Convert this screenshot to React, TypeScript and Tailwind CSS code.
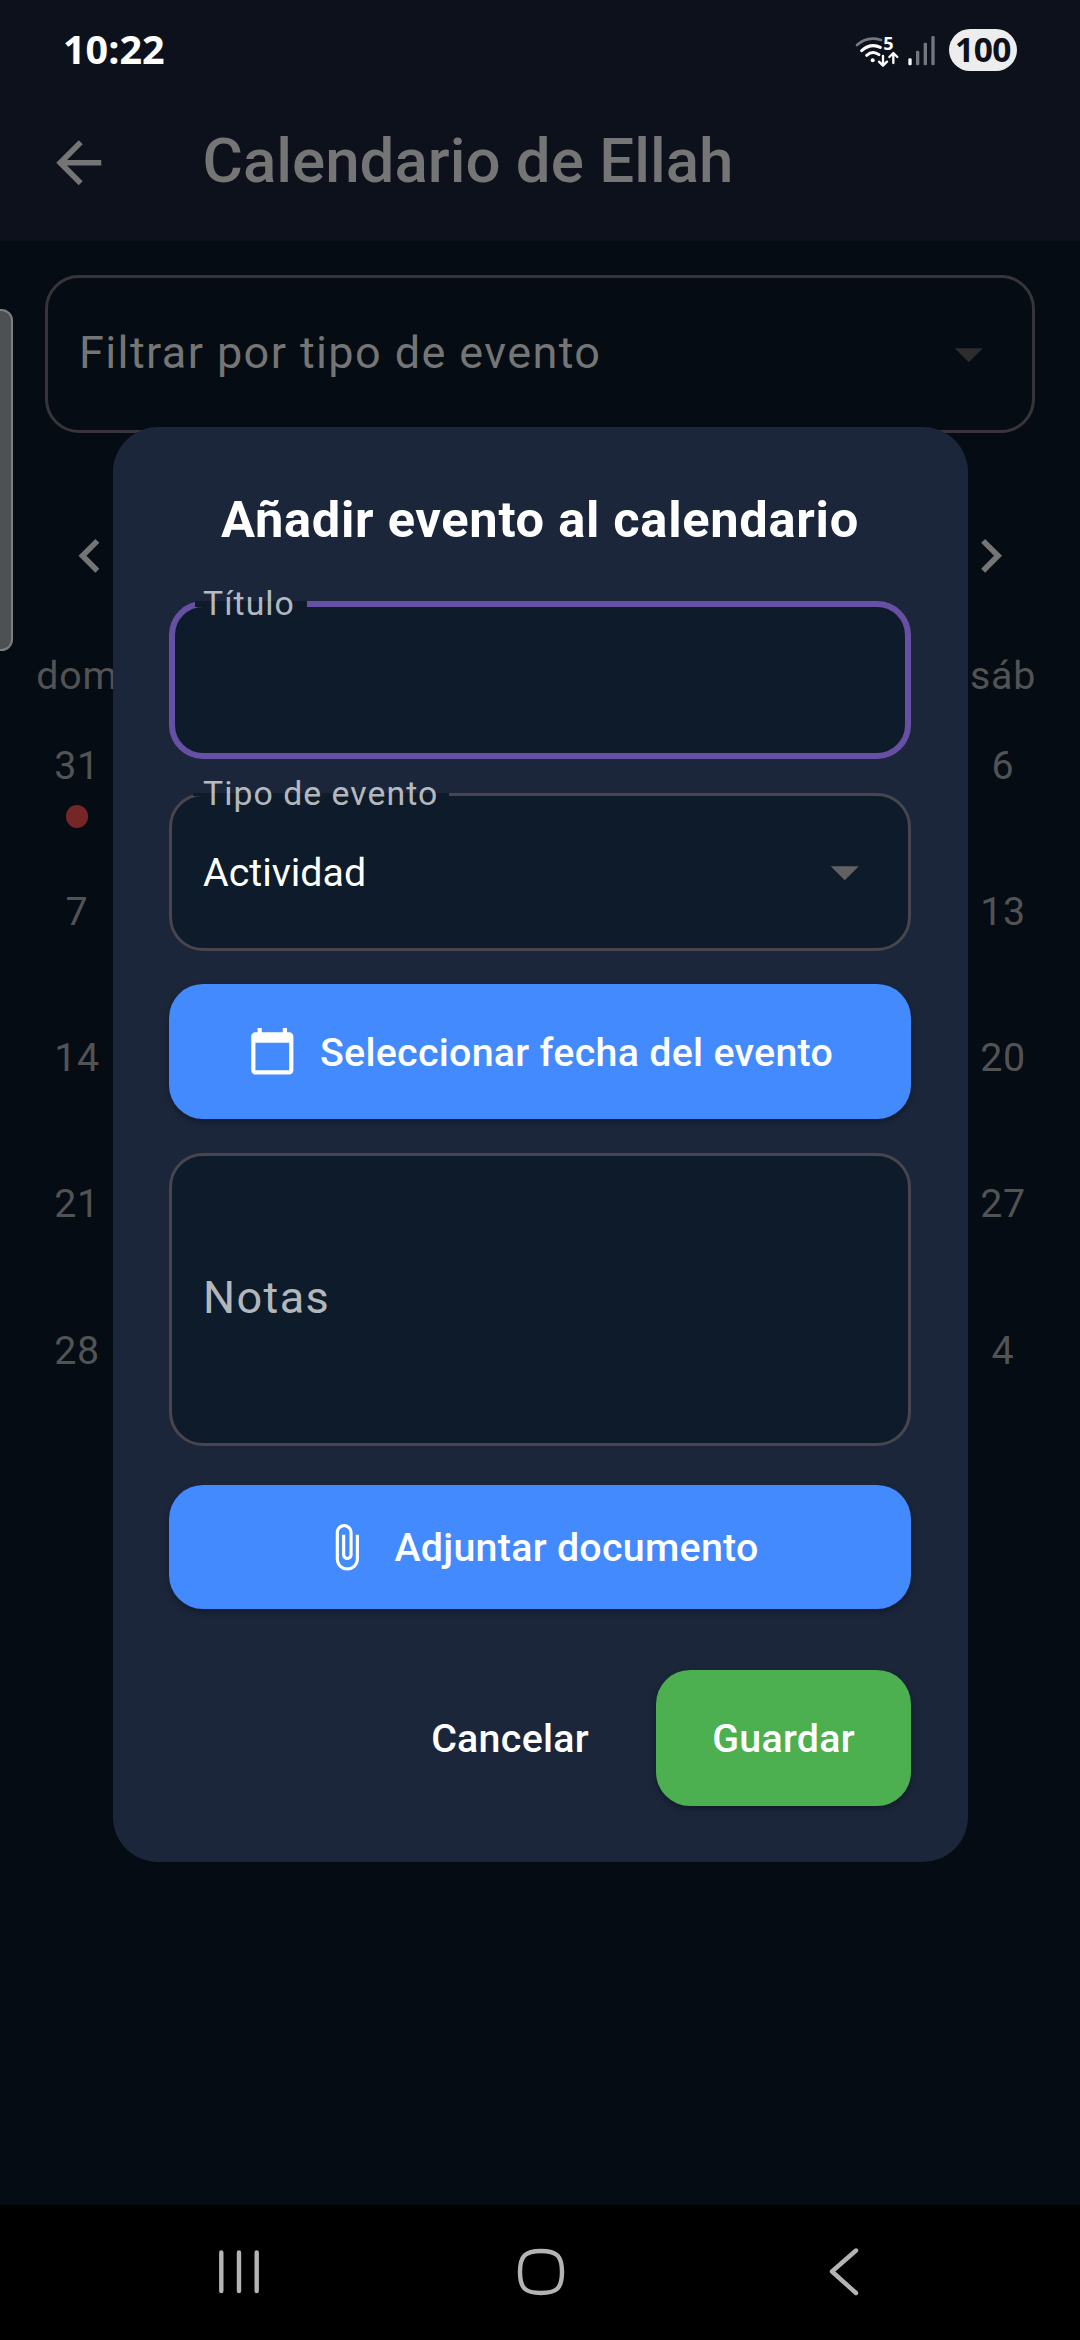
import type { ReactNode } from "react";

const WEEKS = [
  { first: "31", last: "6", event: true },
  { first: "7", last: "13" },
  { first: "14", last: "20" },
  { first: "21", last: "27" },
  { first: "28", last: "4" },
];

function Icon({ d, className }: { d: string; className: string }) {
  return (
    <svg viewBox="0 0 24 24" fill="currentColor" className={className}>
      <path d={d} />
    </svg>
  );
}

const ARROW_BACK = "M20 11H7.83l5.59-5.59L12 4l-8 8 8 8 1.41-1.41L7.83 13H20v-2z";
const CHEVRON_LEFT = "M15.41 7.41L14 6l-6 6 6 6 1.41-1.41L10.83 12z";
const CHEVRON_RIGHT = "M10 6L8.59 7.41 13.17 12l-4.58 4.59L10 18l6-6z";
const DROP_DOWN = "M7 10l5 5 5-5z";
const CALENDAR =
  "M20 3h-1V1h-2v2H7V1H5v2H4c-1.1 0-2 .9-2 2v16c0 1.1.9 2 2 2h16c1.1 0 2-.9 2-2V5c0-1.1-.9-2-2-2zm0 18H4V8h16v13z";
const ATTACH =
  "M16.5 6v11.5c0 2.21-1.79 4-4 4s-4-1.79-4-4V5c0-1.38 1.12-2.5 2.5-2.5s2.5 1.12 2.5 2.5v10.5c0 .55-.45 1-1 1s-1-.45-1-1V6H10v9.5c0 1.38 1.12 2.5 2.5 2.5s2.5-1.12 2.5-2.5V5c0-2.21-1.79-4-4-4S7 2.79 7 5v12.5c0 3.04 2.46 5.5 5.5 5.5s5.5-2.46 5.5-5.5V6h-1.5z";

function StatusBar() {
  return (
    <div className="flex h-[84px] items-start px-[63px] pt-[28px] font-['Open_Sans',sans-serif] text-white">
      <span className="text-[39.5px] leading-[42px] font-bold">10:22</span>
      <div className="mt-px ml-auto flex h-[42px] items-center">
        <svg viewBox="225 84 135 132" className="h-[44px] w-[45px]" fill="none" strokeLinecap="round">
          <path d="M231 135Q262 107 303 120" stroke="#74777d" strokeWidth="8" />
          <path d="M245 152Q272 128 301 142" stroke="#fff" strokeWidth="9" />
          <path d="M260 166Q278 150 297 164" stroke="#fff" strokeWidth="9" />
          <circle cx="278" cy="181" r="6" fill="#fff" />
          <text x="310" y="150" fontSize="54" fontWeight="700" fill="#fff" fontFamily="Open Sans, sans-serif">
            5
          </text>
          <path d="M309 168V196M297 185L309 197L321 185" stroke="#fff" strokeWidth="7" strokeLinejoin="round" />
          <path d="M340 189V160M328 171L340 159L352 171" stroke="#fff" strokeWidth="7" strokeLinejoin="round" />
        </svg>
        <svg viewBox="384 102 84 96" className="ml-[8px] h-[32px] w-[28px]">
          <rect x="385" y="175" width="10" height="21" rx="4" fill="#fff" />
          <rect x="408" y="152" width="10" height="44" rx="4" fill="#74777d" />
          <rect x="431" y="128" width="10" height="68" rx="4" fill="#74777d" />
          <rect x="454" y="108" width="10" height="88" rx="4" fill="#74777d" />
        </svg>
        <span className="ml-[13px] flex h-[42px] w-[68px] items-center justify-center rounded-full bg-[#ededed] text-[33.5px] leading-[42px] font-bold tracking-[-0.5px] text-[#0d111b]">
          <span className="-mt-[2px]">100</span>
        </span>
      </div>
    </div>
  );
}

function Field({
  label,
  focused,
  children,
  notch,
}: {
  label: string;
  focused?: boolean;
  children?: ReactNode;
  notch: string;
}) {
  return (
    <div
      className={
        "relative flex h-[158px] items-center rounded-[34px] bg-[#0d1b2a] pr-[33px] " +
        (focused ? "border-6 border-[#6750a4] pl-[28px]" : "border-3 border-[#49454f] pl-[31px]")
      }
    >
      <span
        className={
          "absolute flex items-center bg-[#0d1b2a] " +
          (focused ? "-top-[6px] left-[20px] h-[6px] pl-[8px] " : "-top-[3px] left-[21px] h-[3px] pl-[10px] ") +
          notch
        }
      >
        <span
          className={
            "text-[33.75px] leading-[40px] tracking-[1.05px] whitespace-nowrap text-white/70 " +
            (focused ? "" : "-mt-[2px]")
          }
        >
          {label}
        </span>
      </span>
      {children}
    </div>
  );
}

function AddEventDialog() {
  return (
    <section className="absolute top-[427px] left-[113px] flex h-[1435px] w-[855px] flex-col rounded-[45px] bg-[#1b263b] pr-[57px] pl-[56px] text-white">
      <h2 className="mt-[63px] text-center text-[50.625px] leading-[60px] font-bold tracking-[0.7px]">
        Añadir evento al calendario
      </h2>
      <div className="mt-[51px] flex flex-col gap-[34px]">
        <Field label="Título" focused notch="w-[112px]" />
        <Field label="Tipo de evento" notch="w-[256px]">
          <span className="mt-[2px] text-[39.375px] leading-[46px]">Actividad</span>
          <Icon d={DROP_DOWN} className="-mr-[3px] ml-auto size-[67.5px] text-[#616161]" />
        </Field>
        <button className="-mt-px flex h-[135px] items-center justify-center gap-[22.5px] rounded-[34px] bg-[#448aff] text-[39.375px] font-medium tracking-[0.28px] shadow-[0_3px_6px_rgba(0,0,0,0.3)]">
          <Icon d={CALENDAR} className="size-[50.6px]" />
          <span className="mt-[2px]">Seleccionar fecha del evento</span>
        </button>
        <div className="flex h-[293px] items-center rounded-[34px] border-3 border-[#49454f] bg-[#0d1b2a] pb-[4px] pl-[31px] text-[45px] tracking-[1.4px] text-white/70">
          Notas
        </div>
      </div>
      <button className="mt-[39px] flex h-[124px] items-center justify-center gap-[22.5px] rounded-[34px] bg-[#448aff] text-[39.375px] font-medium tracking-[0.28px] shadow-[0_3px_6px_rgba(0,0,0,0.3)]">
        <Icon d={ATTACH} className="size-[50.6px]" />
        <span className="mt-[2px]">Adjuntar documento</span>
      </button>
      <div className="mt-[61px] flex items-center justify-end gap-[67px] text-[39.375px] font-medium tracking-[0.28px]">
        <button className="pt-[2px]">Cancelar</button>
        <button className="h-[136px] w-[255px] rounded-[34px] bg-[#4caf50] pt-[2px] shadow-[0_3px_6px_rgba(0,0,0,0.3)]">
          Guardar
        </button>
      </div>
    </section>
  );
}

function NavBar() {
  return (
    <nav className="mt-auto flex h-[135px] items-center bg-black pb-[2px] pl-[217px] text-[#b4b4b4]">
      <svg viewBox="0 0 44 48" className="h-[48px] w-[44px]" stroke="currentColor" strokeWidth="4.4" strokeLinecap="round">
        <path d="M4.3 4.5V43M22 4.5V43M39.7 4.5V43" />
      </svg>
      <svg viewBox="0 0 48 48" className="ml-[256px] h-[48px] w-[48px]" fill="none" stroke="currentColor" strokeWidth="4.4">
        <path d="M24 3C40 3 45 8 45 24S40 45 24 45S3 40 3 24S8 3 24 3Z" />
      </svg>
      <svg viewBox="0 0 34 48" className="ml-[262px] h-[48px] w-[34px]" fill="none" stroke="currentColor" strokeWidth="4.4" strokeLinecap="round" strokeLinejoin="round">
        <path d="M29 2.5L5 23.500L29 45" />
      </svg>
    </nav>
  );
}

export default function App() {
  return (
    <div className="relative flex h-[2340px] w-[1080px] flex-col overflow-hidden bg-[#050c13] font-['Roboto',sans-serif]">
      <header className="bg-[#0d111b] text-[#757575]">
        <StatusBar />
        <div className="flex h-[157px] items-center pl-[45px]">
          <Icon d={ARROW_BACK} className="size-[67.5px]" />
          <h1 className="-mt-[3px] ml-[90px] text-[61.875px] leading-[72px] font-medium">Calendario de Ellah</h1>
        </div>
      </header>

      <main>
        <div className="mx-[45px] mt-[34px] flex h-[158px] items-center justify-between rounded-[34px] border-3 border-[#38353a] pr-[30px] pl-[31px] text-[#757575]">
          <span className="-mt-[3px] text-[45px] leading-[53px] tracking-[1.4px]">Filtrar por tipo de evento</span>
          <Icon d={DROP_DOWN} className="size-[67.5px] text-[#2d2d2d]" />
        </div>

        <div className="mt-[89px] flex justify-between px-[56px] text-[#757575]">
          <Icon d={CHEVRON_LEFT} className="size-[67.5px]" />
          <Icon d={CHEVRON_RIGHT} className="size-[67.5px]" />
        </div>

        <div className="mt-[63px] flex flex-col text-center text-[39.375px] leading-[46px] tracking-[0.7px] text-[#525354]">
          <div className="flex justify-between">
            <span className="w-[154px]">dom</span>
            <span className="w-[154px]">sáb</span>
          </div>
          <div className="mt-[44px] flex flex-col">
            {WEEKS.map((week) => (
              <div key={week.first} className="flex h-[146.25px] justify-between">
                <div className="flex w-[154px] flex-col items-center">
                  {week.first}
                  {week.event && <i className="mt-[16.5px] size-[22.5px] rounded-full bg-[#752626]" />}
                </div>
                <div className="w-[154px]">{week.last}</div>
              </div>
            ))}
          </div>
        </div>
      </main>

      <NavBar />

      <div className="absolute top-[309px] -left-[10px] h-[342px] w-[23px] rounded-[12px] border-2 border-[#7c7e80] bg-[#4e5154]" />
      <AddEventDialog />
    </div>
  );
}
